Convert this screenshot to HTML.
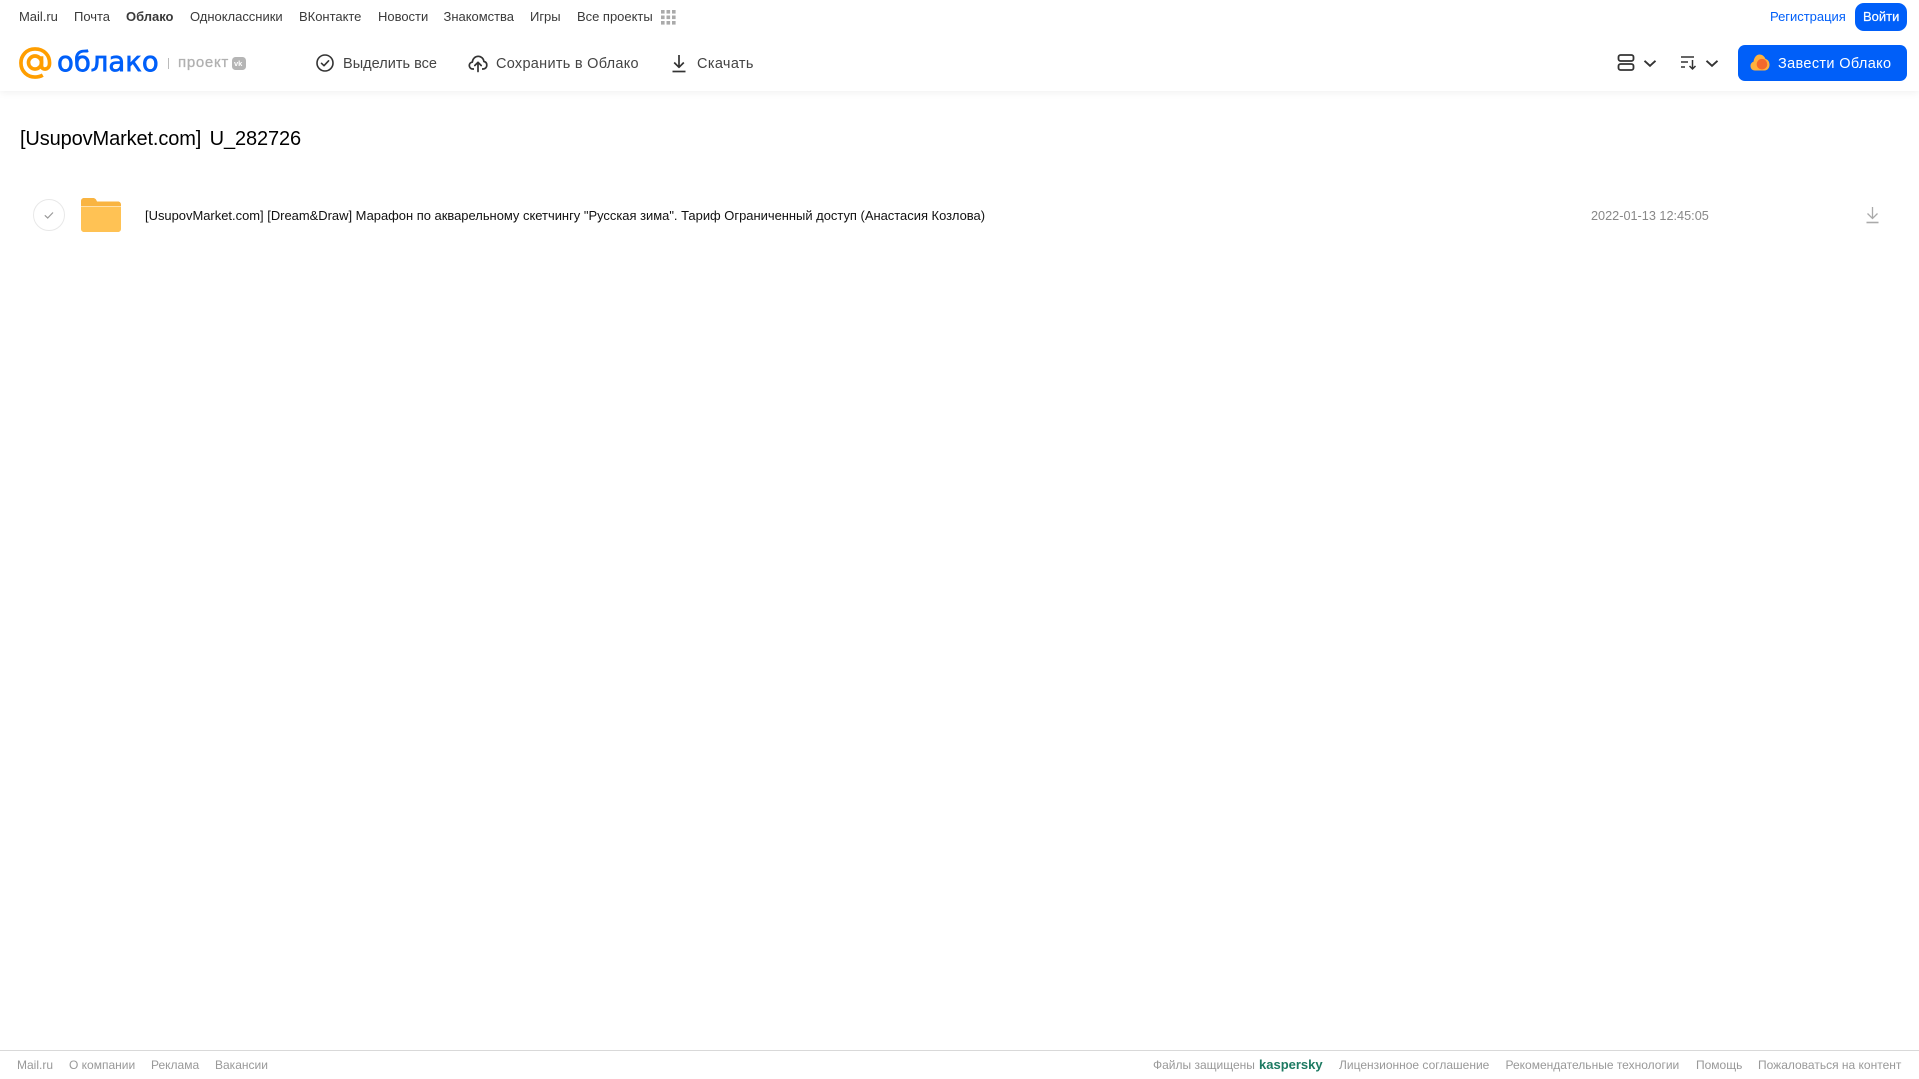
<!DOCTYPE html>
<html lang="ru"><head><meta charset="utf-8"><title>Облако</title>
<style>
html,body{margin:0;padding:0;background:#fff;width:1919px;height:1079px;overflow:hidden}
body{position:relative;font-family:"Liberation Sans",Arial,sans-serif;color:#333}
.t{position:absolute;white-space:nowrap;line-height:20px;display:block}
.n{top:7px;font-size:13px;color:#3a3a3a;letter-spacing:-.02px}
.b{top:53.500px;font-size:14.5px;color:#444;letter-spacing:.35px}
.f{top:1055px;font-size:12px;color:#999}
svg{position:absolute;display:block}
#hd{position:absolute;left:0;top:0;width:1919px;height:91px;background:#fff;box-shadow:0 1px 8px rgba(0,0,0,.07)}
#ft{position:absolute;left:0;top:1050px;width:1919px;height:1px;background:#d9d9d9}
</style></head><body>
<div id="hd"></div>
<span class="t n" style="left:19px">Mail.ru</span>
<span class="t n" style="left:74px">Почта</span>
<span class="t n" style="left:126px;font-weight:700">Облако</span>
<span class="t n" style="left:190px">Одноклассники</span>
<span class="t n" style="left:299px">ВКонтакте</span>
<span class="t n" style="left:378px">Новости</span>
<span class="t n" style="left:443.500px">Знакомства</span>
<span class="t n" style="left:530px">Игры</span>
<span class="t n" style="left:577px">Все проекты</span>
<svg style="left:661px;top:10px" width="15" height="15" fill="#aaa"><rect x="0" y="0" width="3.6" height="3.6"/><rect x="5.5" y="0" width="3.6" height="3.6"/><rect x="11" y="0" width="3.6" height="3.6"/><rect x="0" y="5.5" width="3.6" height="3.6"/><rect x="5.5" y="5.5" width="3.6" height="3.6"/><rect x="11" y="5.5" width="3.6" height="3.6"/><rect x="0" y="11" width="3.6" height="3.6"/><rect x="5.5" y="11" width="3.6" height="3.6"/><rect x="11" y="11" width="3.6" height="3.6"/></svg>
<span class="t n" style="left:1770px;color:#005ff9">Регистрация</span>
<div style="position:absolute;left:1855px;top:3px;width:52px;height:28px;border-radius:9px;background:#005ff9"></div>
<span class="t" style="left:1863px;top:7px;font-size:13px;color:#fff;font-weight:400;-webkit-text-stroke:.2px #fff">Войти</span>

<svg style="left:17.500px;top:47px" width="34" height="33" viewBox="0 0 35 34" fill="none" stroke="#ff9e00" stroke-width="3.800"><circle cx="17.500" cy="16" r="6.700"/><path d="M24.200 9.500V19.500C24.200 24 31.800 24 32.400 18C33.300 8.500 26.500 2 17.500 2C9 2 3 8.500 3 16.500C3 25.500 10 31 17.500 31C20.500 31 23 30.400 25.500 29"/></svg>
<span class="t" style="left:57px;top:44px;line-height:36px;font-size:27.500px;font-weight:400;color:#005ff9;-webkit-text-stroke:.7px #005ff9;font-family:'DejaVu Sans',sans-serif">облако</span>
<div style="position:absolute;left:168px;top:58px;width:1px;height:11px;background:#bbb"></div>
<span class="t" style="left:178px;top:53px;font-size:15px;font-weight:400;color:#b0b0b0;letter-spacing:.7px;-webkit-text-stroke:.3px #b0b0b0">проект</span>
<div style="position:absolute;left:232px;top:57px;width:14px;height:13px;border-radius:3.500px;background:#b5b5b5"></div>
<span class="t" style="left:234px;top:58px;font-size:7.500px;line-height:11px;font-weight:700;color:#fff">vk</span>

<svg style="left:315px;top:53px" width="20" height="20" viewBox="0 0 20 20" fill="none" stroke="#333" stroke-width="1.600"><circle cx="10" cy="10" r="8"/><path d="M6.500 10.300L9 12.700L13.600 7.800" stroke-linecap="round" stroke-linejoin="round"/></svg>
<span class="t b" style="left:343px;letter-spacing:.02px">Выделить все</span>
<svg style="left:468px;top:53px" width="20" height="20" viewBox="0 0 20 20" fill="none" stroke="#333" stroke-width="1.700"><path d="M6 16H4.800C2.800 16 1.300 14.500 1.300 12.500C1.300 10.700 2.600 9.300 4.300 9.100C4.700 5.700 7.100 3.300 10.200 3.300C13.200 3.300 15.500 5.500 15.900 8.500C17.700 8.800 18.800 10.300 18.800 12.200C18.800 14.300 17.200 16 15.200 16H14" stroke-linejoin="round"/><path d="M10 18.500V9.500M6.800 12.500L10 9.300L13.200 12.500" stroke-linecap="round" stroke-linejoin="round"/></svg>
<span class="t b" style="left:496px;letter-spacing:.28px">Сохранить в Облако</span>
<svg style="left:669px;top:54px" width="20" height="19" viewBox="0 0 20 19" fill="none" stroke="#333" stroke-width="1.700"><path d="M10 1V13M5.200 8.500L10 13.300L14.800 8.500" stroke-linejoin="round"/><path d="M3.500 17.500H16.500"/></svg>
<span class="t b" style="left:697px">Скачать</span>

<svg style="left:1617px;top:53px" width="18" height="19" viewBox="0 0 18 19" fill="none" stroke="#333" stroke-width="1.800"><rect x="1.500" y="2" width="15" height="6" rx="2"/><rect x="1.500" y="11" width="15" height="6" rx="2"/></svg>
<svg style="left:1643px;top:59px" width="14" height="9" viewBox="0 0 14 9" fill="none" stroke="#333" stroke-width="1.900"><path d="M1.500 1.800L7 6.800L12.500 1.800"/></svg>
<svg style="left:1680px;top:55px" width="18" height="16" viewBox="0 0 18 16" fill="none" stroke="#333" stroke-width="1.500"><path d="M1 2H14M1 7H8M1 12H5"/><path d="M12.500 5V14M9.500 11L12.500 14L15.500 11"/></svg>
<svg style="left:1705px;top:59px" width="14" height="9" viewBox="0 0 14 9" fill="none" stroke="#333" stroke-width="1.900"><path d="M1.500 1.800L7 6.800L12.500 1.800"/></svg>
<div style="position:absolute;left:1738px;top:45px;width:169px;height:36px;border-radius:7px;background:#005ff9"></div>
<svg style="left:1750px;top:54px" width="20" height="17" viewBox="0 0 20 17"><path d="M5 16.500C2.200 16.500 .500 14.500 .500 12C.500 9.800 1.800 8.300 3.500 7.800C4 3.500 6.500 .500 9.500 .500C12.500 .500 14.500 2.500 15.500 5C18 5.500 19.500 7.800 19.500 10.800C19.500 14 17.500 16.500 14.500 16.500Z" fill="#ffb13d"/><circle cx="12" cy="10.200" r="5.300" fill="#f4692c"/></svg>
<span class="t b" style="left:1778px;color:#fff">Завести Облако</span>

<span class="t" style="left:20px;top:127px;line-height:24px;font-size:20px;color:#000;word-spacing:3px;letter-spacing:-.12px">[UsupovMarket.com] U_282726</span>

<svg style="left:33px;top:199px" width="32" height="32" viewBox="0 0 32 32" fill="none"><circle cx="16" cy="16" r="15.500" stroke="#e8e8e8"/><path d="M11.800 16.300L14.700 19L20 13.500" stroke="#9a9a9a" stroke-width="1.200"/></svg>
<svg style="left:81px;top:198px" width="40" height="34" viewBox="0 0 40 34"><path d="M0 3C0 1.300 1.300 0 3 0H12C14 0 15 1 16 3.500H37C38.700 3.500 40 4.800 40 6.500V8H0Z" fill="#f9b441"/><path d="M0 8.500H40V31C40 32.700 38.700 34 37 34H3C1.300 34 0 32.700 0 31Z" fill="#ffc254"/></svg>
<span class="t" style="left:145px;top:206px;font-size:12.950px;color:#111">[UsupovMarket.com] [Dream&amp;Draw] Марафон по акварельному скетчингу "Русская зима". Тариф Ограниченный доступ (Анастасия Козлова)</span>
<span class="t" style="left:1591px;top:206px;font-size:12.700px;color:#888">2022-01-13 12:45:05</span>
<svg style="left:1865px;top:206px" width="15" height="18" viewBox="0 0 15 18" fill="none" stroke="#aaa" stroke-width="1.300"><path d="M7.500 1V12M2.500 7.500L7.500 12.500L12.500 7.500"/><path d="M1.500 16.500H13.500" stroke-width="1.600"/></svg>

<div id="ft"></div>
<span class="t f" style="left:17px">Mail.ru</span>
<span class="t f" style="left:69px">О компании</span>
<span class="t f" style="left:151px">Реклама</span>
<span class="t f" style="left:215px">Вакансии</span>
<span class="t f" style="left:1153px">Файлы защищены</span>
<span class="t f" style="left:1259px;font-size:13px;font-weight:700;color:#1d7a62">kaspersky</span>
<span class="t f" style="left:1339px">Лицензионное соглашение</span>
<span class="t f" style="left:1505.500px">Рекомендательные технологии</span>
<span class="t f" style="left:1696px">Помощь</span>
<span class="t f" style="left:1758px">Пожаловаться на контент</span>
</body></html>
